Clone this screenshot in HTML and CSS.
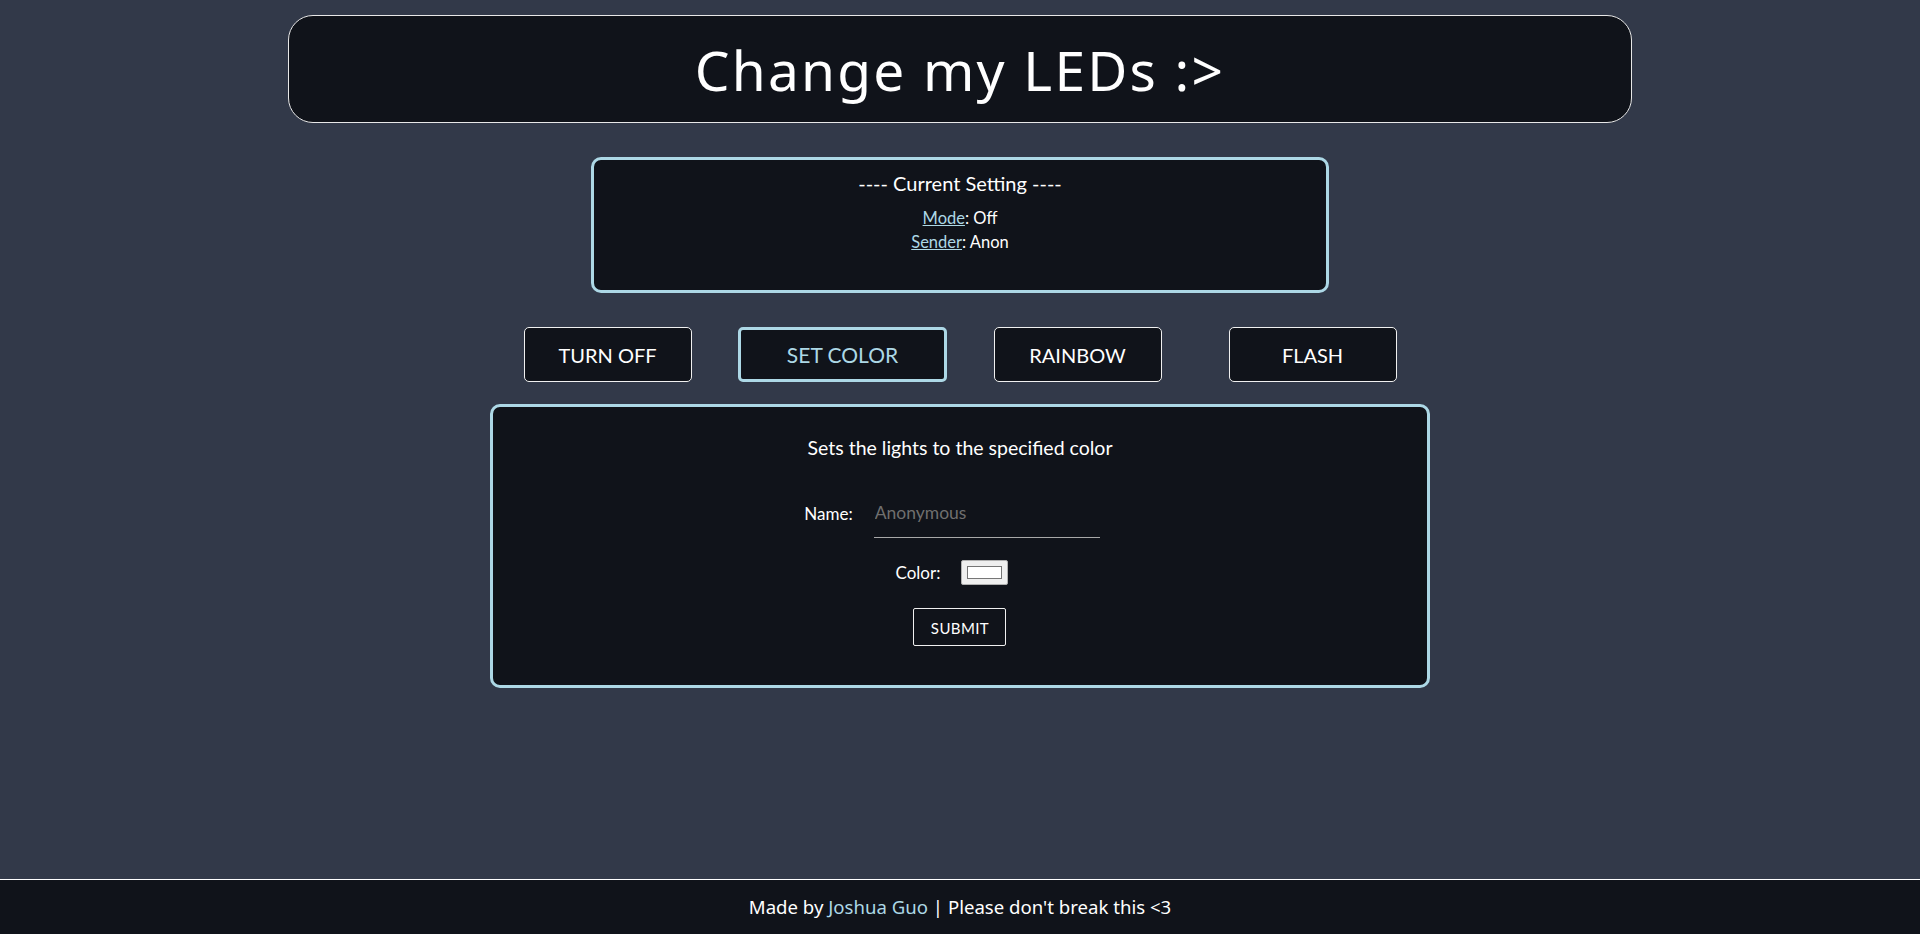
FILE: index.html
```html
<!DOCTYPE html>
<html lang="en">
<head>
<meta charset="utf-8">
<title>Change my LEDs</title>
<link rel="stylesheet" href="styles.css">
</head>
<body>
<main class="page">
  <header class="title-box">
    <h1 class="title">Change my LEDs :&gt;</h1>
  </header>

  <section class="current">
    <div class="current-title">---- Current Setting ----</div>
    <div class="current-line"><a class="link" href="#">Mode</a>: Off</div>
    <div class="current-line"><a class="link" href="#">Sender</a>: Anon</div>
  </section>

  <nav class="modes">
    <button class="mode-btn">TURN OFF</button>
    <button class="mode-btn selected">SET COLOR</button>
    <button class="mode-btn">RAINBOW</button>
    <button class="mode-btn">FLASH</button>
  </nav>

  <section class="panel">
    <div class="panel-desc">Sets the lights to the specified color</div>
    <form class="panel-form">
      <div class="row row-name">
        <label class="field-label" for="name">Name:</label>
        <input class="name-input" id="name" type="text" placeholder="Anonymous">
      </div>
      <div class="row row-color">
        <label class="field-label" for="color">Color:</label>
        <input class="color-input" id="color" type="color" value="#ffffff">
      </div>
      <button class="submit" type="button">SUBMIT</button>
    </form>
  </section>
</main>
<footer class="footer">
  <p class="footer-text">Made by <a class="footer-link" href="#">Joshua Guo</a> | Please don't break this &lt;3</p>
</footer>
</body>
</html>
```
FILE: styles.css
```css
html, body {
  margin: 0;
  padding: 0;
}
body {
  background: #323949;
  color: #ffffff;
  font-family: "Lato", "Open Sans", sans-serif;
  min-height: 100vh;
  display: flex;
  flex-direction: column;
}
.page {
  flex: 1;
  display: flex;
  flex-direction: column;
  align-items: center;
}
.title-box {
  margin-top: 15px;
  width: 70%;
  height: 108px;
  box-sizing: border-box;
  border: 1px solid #e8e8e8;
  border-radius: 25px;
  background: #10131a;
  display: flex;
  align-items: center;
  justify-content: center;
}
.title {
  margin: 0;
  font-family: "Noto Sans", sans-serif;
  font-weight: 400;
  font-size: 55px;
  letter-spacing: 2.2px;
  line-height: 1;
  color: #ffffff;
}
.current {
  margin-top: 34px;
  width: 738px;
  height: 136px;
  box-sizing: border-box;
  border: 3px solid #add8e6;
  border-radius: 10px;
  background: #10131a;
  padding-top: 10px;
  text-align: center;
}
.current-title {
  font-size: 20px;
  line-height: 26px;
  margin-bottom: 10px;
}
.current-line {
  font-size: 16.5px;
  line-height: 24px;
}
.link {
  color: #add8e6;
  text-decoration: underline;
}
.modes {
  margin-top: 34px;
  width: 940px;
  display: grid;
  grid-template-columns: repeat(4, 1fr);
  justify-items: center;
}
.mode-btn {
  width: 168px;
  height: 55px;
  box-sizing: border-box;
  background: #10131a;
  color: #ffffff;
  border: 1px solid #f0f0f0;
  border-radius: 5px;
  font-family: "Lato", "Open Sans", sans-serif;
  font-size: 20px;
  padding: 0;
  cursor: pointer;
}
.mode-btn.selected {
  width: 209px;
  border: 3px solid #add8e6;
  color: #add8e6;
  font-size: 21px;
}
.panel {
  margin-top: 22px;
  width: 940px;
  height: 284px;
  box-sizing: border-box;
  border: 3px solid #add8e6;
  border-radius: 10px;
  background: #10131a;
  padding-top: 29px;
  display: flex;
  flex-direction: column;
  align-items: center;
}
.panel-desc {
  font-size: 19.5px;
  line-height: 24px;
}
.panel-form {
  margin-top: 28px;
  display: flex;
  flex-direction: column;
  align-items: center;
}
.row {
  display: flex;
  align-items: center;
  gap: 21px;
  padding-right: 16px;
}
.row-name {
  height: 50px;
}
.row-color {
  margin-top: 22px;
  height: 25px;
}
.field-label {
  font-size: 17px;
  color: #ffffff;
}
.name-input {
  width: 226px;
  height: 50px;
  box-sizing: border-box;
  background: transparent;
  border: none;
  border-bottom: 1px solid #a8a8a8;
  color: #ffffff;
  font-family: "Lato", "Open Sans", sans-serif;
  font-size: 17.5px;
  padding: 0 0 0 1px;
  outline: none;
}
.name-input::placeholder {
  color: #6f6f6f;
}
.color-input {
  width: 47px;
  height: 25px;
  box-sizing: border-box;
  padding: 0;
  margin: 0;
  border: 1px solid #b0b0b0;
  border-radius: 2px;
  background: #efefef;
  -webkit-appearance: none;
  appearance: none;
}
.color-input::-webkit-color-swatch-wrapper {
  padding: 5px 5px;
}
.color-input::-webkit-color-swatch {
  border: 1px solid #767676;
  border-radius: 0;
}
.submit {
  margin-top: 23px;
  width: 93px;
  height: 38px;
  box-sizing: border-box;
  background: #10131a;
  color: #ffffff;
  border: 1px solid #f0f0f0;
  border-radius: 2px;
  font-family: "Lato", "Open Sans", sans-serif;
  font-size: 15px;
  letter-spacing: 0.4px;
  padding: 2px 0 0;
}
.footer {
  height: 55px;
  box-sizing: border-box;
  border-top: 1px solid #ffffff;
  background: #10131a;
}
.footer-text {
  margin: 0;
  line-height: 54px;
  text-align: center;
  color: #ffffff;
  font-family: "Noto Sans", sans-serif;
  font-size: 18.6px;
}
.footer-link {
  color: #add8e6;
  text-decoration: none;
}
```
